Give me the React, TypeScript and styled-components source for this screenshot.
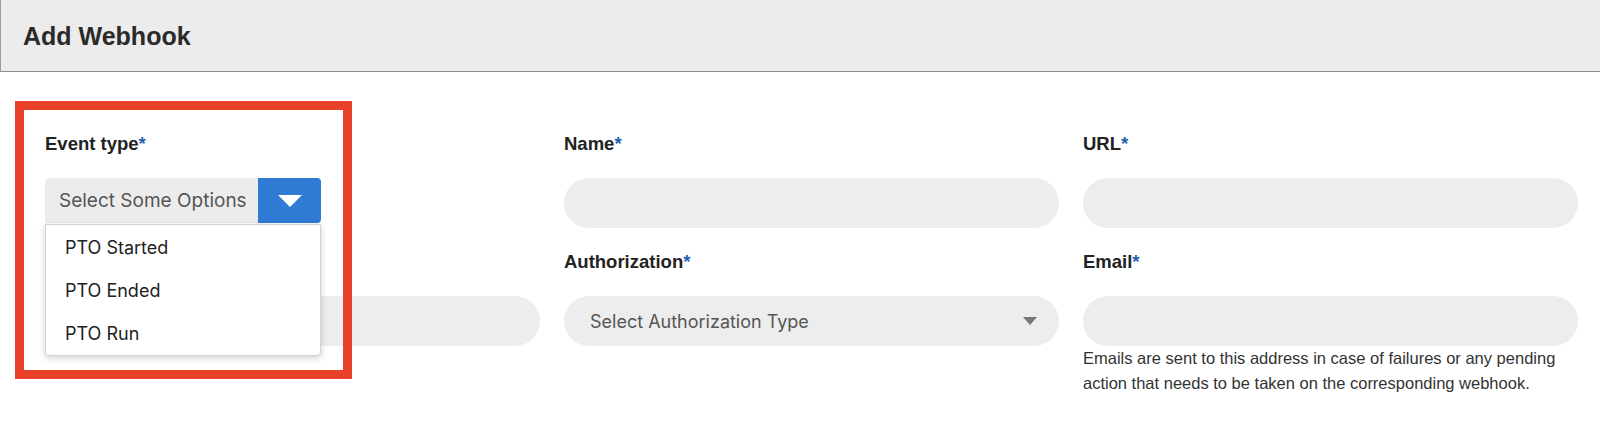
import React, { FC } from "react";
import styled, { createGlobalStyle } from "styled-components";

const GlobalStyle = createGlobalStyle`
  html, body {
    margin: 0;
    padding: 0;
    background: #ffffff;
  }
  body {
    font-family: "Liberation Sans", Arial, sans-serif;
    color: #222;
  }
`;

const Page = styled.div`
  width: 1600px;
  min-height: 421px;
`;

const Header = styled.header`
  height: 72px;
  box-sizing: border-box;
  background: #ececec;
  border-left: 1px solid #9a9a9a;
  border-bottom: 1px solid #8c8c8c;
  display: flex;
  align-items: center;
  padding: 2px 0 0 22px;
`;

const Title = styled.h1`
  margin: 0;
  font-family: "Liberation Sans", Arial, sans-serif;
  font-weight: 700;
  font-size: 25px;
  color: #2a2a2a;
`;

const Form = styled.div`
  display: grid;
  grid-template-columns: repeat(3, 495px);
  column-gap: 24px;
  row-gap: 22px;
  padding: 60px 0 0 45px;
`;

const Field = styled.div`
  position: relative;
  display: flex;
  flex-direction: column;
`;

const Label = styled.label`
  font-family: "Liberation Sans", Arial, sans-serif;
  font-weight: 700;
  font-size: 18.5px;
  line-height: 24px;
  color: #222;
  margin-bottom: 22px;
`;

const Req = styled.span`
  color: #1f62b0;
`;

const TextInput = styled.div`
  height: 50px;
  border-radius: 25px;
  background: #ededed;
`;

const SelectPill = styled.div`
  height: 50px;
  border-radius: 25px;
  background: #ededed;
  display: flex;
  align-items: center;
  justify-content: space-between;
  padding: 0 22px 0 26px;
  font-family: Inter, "Liberation Sans", sans-serif;
  font-size: 18px;
  color: #555;
`;

const Caret = styled.span<{ color: string; w: number; h: number }>`
  width: 0;
  height: 0;
  border-left: ${(p) => p.w / 2}px solid transparent;
  border-right: ${(p) => p.w / 2}px solid transparent;
  border-top: ${(p) => p.h}px solid ${(p) => p.color};
`;

const Helper = styled.p`
  margin: 0;
  font-family: "Liberation Sans", Arial, sans-serif;
  font-size: 16.5px;
  line-height: 25px;
  color: #333;
`;

const Multi = styled.div`
  position: relative;
  width: 276px;
  display: flex;
  height: 45px;
`;

const MultiBox = styled.div`
  flex: 1;
  background: #ececec;
  border-radius: 4px 0 0 0;
  display: flex;
  align-items: center;
  padding-left: 14px;
  font-family: Inter, "Liberation Sans", sans-serif;
  font-size: 19px;
  color: #555;
  white-space: nowrap;
`;

const MultiButton = styled.div`
  width: 63px;
  flex-shrink: 0;
  background: #2f7bd6;
  border-radius: 0 4px 4px 0;
  display: flex;
  align-items: center;
  justify-content: center;
`;

const Menu = styled.ul`
  position: absolute;
  top: 46px;
  left: 0;
  width: 276px;
  box-sizing: border-box;
  margin: 0;
  padding: 1px 0 0;
  list-style: none;
  background: #fff;
  border: 1px solid #d2d2d2;
  border-radius: 0 0 4px 4px;
  box-shadow: 0 2px 7px rgba(0, 0, 0, 0.18);
  z-index: 5;
`;

const MenuItem = styled.li`
  height: 43px;
  display: flex;
  align-items: center;
  padding-left: 19px;
  font-family: Inter, "Liberation Sans", sans-serif;
  font-size: 18px;
  color: #222;
`;

const Highlight = styled.div`
  position: absolute;
  top: -31px;
  left: -30px;
  width: 337px;
  height: 278px;
  box-sizing: border-box;
  border: 9px solid #e9402a;
  pointer-events: none;
  z-index: 10;
`;

const FieldLabel: FC<{ text: string }> = ({ text }) => (
  <Label>
    {text}
    <Req>*</Req>
  </Label>
);

const options = ["PTO Started", "PTO Ended", "PTO Run"];

export default function App() {
  return (
    <Page>
      <GlobalStyle />
      <Header>
        <Title>Add Webhook</Title>
      </Header>
      <Form>
        <Field>
          <FieldLabel text="Event type" />
          <Multi>
            <MultiBox>Select Some Options</MultiBox>
            <MultiButton>
              <Caret color="#fff" w={24} h={12} />
            </MultiButton>
            <Menu>
              {options.map((o) => (
                <MenuItem key={o}>{o}</MenuItem>
              ))}
            </Menu>
          </Multi>
          <Highlight />
        </Field>
        <Field>
          <FieldLabel text="Name" />
          <TextInput />
        </Field>
        <Field>
          <FieldLabel text="URL" />
          <TextInput />
        </Field>
        <Field>
          {/* label sits under the open menu */}
          <Label>{"\u00a0"}</Label>
          <TextInput />
        </Field>
        <Field>
          <FieldLabel text="Authorization" />
          <SelectPill>
            <span>Select Authorization Type</span>
            <Caret color="#777" w={15} h={8} />
          </SelectPill>
        </Field>
        <Field>
          <FieldLabel text="Email" />
          <TextInput />
          <Helper>
            Emails are sent to this address in case of failures or any pending
            action that needs to be taken on the corresponding webhook.
          </Helper>
        </Field>
      </Form>
    </Page>
  );
}
